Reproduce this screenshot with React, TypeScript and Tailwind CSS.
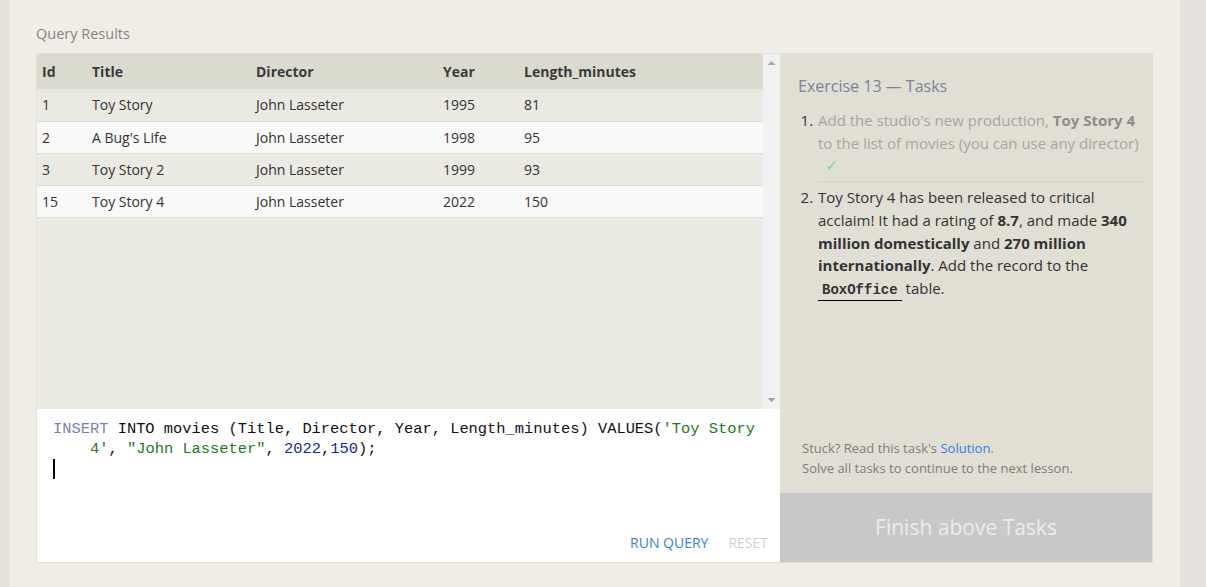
import React from "react";

const rows = [
  { id: "1", title: "Toy Story", director: "John Lasseter", year: "1995", len: "81" },
  { id: "2", title: "A Bug's Life", director: "John Lasseter", year: "1998", len: "95" },
  { id: "3", title: "Toy Story 2", director: "John Lasseter", year: "1999", len: "93" },
  { id: "15", title: "Toy Story 4", director: "John Lasseter", year: "2022", len: "150" },
];

export default function App() {
  return (
    <div
      className="flex w-[1206px] h-[587px] overflow-hidden"
      style={{ fontFamily: '"Open Sans", "Noto Sans", sans-serif' }}
    >
      <div className="w-[10px] shrink-0 bg-[#e5e2de]" />
      <div className="w-[1170px] shrink-0 bg-[#f0ede6] pl-[26px] pt-[24px]">
        <h2 className="text-[14.5px] leading-[20px] text-[#858585]">Query Results</h2>
        <div className="mt-[9px] flex w-[1117px] border border-[#e2dfd6]">
          {/* left column */}
          <div className="flex w-[743px] flex-col">
            <div className="flex h-[355px] bg-[#eae9e2]">
              <div className="flex-1">
                <table className="w-full border-collapse text-[14px] text-[#333]">
                  <thead>
                    <tr className="h-[35px] bg-[#dbdacf] text-left font-bold text-[#3a3a3a]">
                      <th className="w-[50px] pl-[5px] font-bold">Id</th>
                      <th className="w-[164px] pl-[5px] font-bold">Title</th>
                      <th className="w-[187px] pl-[5px] font-bold">Director</th>
                      <th className="w-[81px] pl-[5px] font-bold">Year</th>
                      <th className="pl-[5px] font-bold">Length_minutes</th>
                    </tr>
                  </thead>
                  <tbody>
                    {rows.map((r, i) => (
                      <tr
                        key={r.id}
                        className={
                          "h-[32px] border-b border-[#dcdcd8] " +
                          (i % 2 === 0 ? "bg-[#eae9e2]" : "bg-[#f9f9f9]")
                        }
                      >
                        <td className="pl-[5px]">{r.id}</td>
                        <td className="pl-[5px]">{r.title}</td>
                        <td className="pl-[5px]">{r.director}</td>
                        <td className="pl-[5px]">{r.year}</td>
                        <td className="pl-[5px]">{r.len}</td>
                      </tr>
                    ))}
                  </tbody>
                </table>
              </div>
              <div className="flex w-[17px] flex-col justify-between bg-[#f1f1f1] py-[6px]">
                <svg width="17" height="6" viewBox="0 0 17 6">
                  <polygon points="4.5,5 8.5,1 12.5,5" fill="#a3a3a3" />
                </svg>
                <svg width="17" height="6" viewBox="0 0 17 6">
                  <polygon points="4.5,1 8.5,5 12.5,1" fill="#a3a3a3" />
                </svg>
              </div>
            </div>
            <div className="flex h-[153px] flex-col bg-white">
              <div
                className="flex-1 pl-[16px] pt-[10px] text-[15.4px] leading-[20px] text-[#111]"
                style={{ fontFamily: '"Liberation Mono", "DejaVu Sans Mono", monospace' }}
              >
                <div className="whitespace-pre">
                  <span className="text-[#7682b5]">INSERT</span> INTO movies (Title, Director, Year, Length_minutes) VALUES(
                  <span className="text-[#1d7a1d]">'Toy Story</span>
                </div>
                <div className="whitespace-pre pl-[37px]">
                  <span className="text-[#1d7a1d]">4'</span>, <span className="text-[#1d7a1d]">"John Lasseter"</span>,{" "}
                  <span className="text-[#2323a8]">2022</span>,<span className="text-[#2323a8]">150</span>);
                </div>
                <div className="h-[20px]">
                  <div className="h-full w-[2px] bg-black" />
                </div>
              </div>
              <div className="flex justify-end gap-[20px] pb-[9px] pr-[12px] text-[14px] leading-[20px]">
                <span className="text-[#3b7fe0]">RUN QUERY</span>
                <span className="text-[#cfcfcf]">RESET</span>
              </div>
            </div>
          </div>
          {/* right column */}
          <div className="flex w-[372px] flex-col bg-[#e1dfd4]">
            <div className="flex flex-1 flex-col pl-[18px] pr-[8px] pt-[20px]">
              <h3 className="text-[16px] leading-[24px] text-[#7b8494]">Exercise 13 — Tasks</h3>
              <ol className="mt-[11px] list-decimal pl-[19px] text-[15px] leading-[22.7px]">
                <li className="border-b border-[#d4d2c6] pb-[4px] pl-[1px] text-[#a5a5a3] marker:text-[#333]">
                  Add the studio's new production, <b className="text-[#8c8c8a]">Toy Story 4</b> to the list of movies (you
                  can use any director)
                  <div className="pl-[7px] text-[16px] text-[#8fd49c]">✓</div>
                </li>
                <li className="pl-[1px] pt-[4px] text-[#333] marker:text-[#333]">
                  Toy Story 4 has been released to critical acclaim! It had a rating of <b>8.7</b>, and made{" "}
                  <b>340 million domestically</b> and <b>270 million internationally</b>. Add the record to the{" "}
                  <code
                    className="border-b border-black px-[4px] pb-[2px] text-[14px] font-bold text-[#333]"
                    style={{ fontFamily: '"Liberation Mono", "DejaVu Sans Mono", monospace' }}
                  >
                    BoxOffice
                  </code>{" "}
                  table.
                </li>
              </ol>
              <div className="mt-auto pb-[15px] pl-[4px] text-[13px] leading-[20px] text-[#7d7d7a]">
                <div>
                  Stuck? Read this task's <span className="text-[#2f7de8]">Solution</span>.
                </div>
                <div>Solve all tasks to continue to the next lesson.</div>
              </div>
            </div>
            <div className="flex h-[69px] items-center justify-center bg-[#c8c8c8] text-[21px] text-[#ececec]">
              Finish above Tasks
            </div>
          </div>
        </div>
      </div>
      <div className="flex-1 bg-[#e5e2de]" />
    </div>
  );
}
